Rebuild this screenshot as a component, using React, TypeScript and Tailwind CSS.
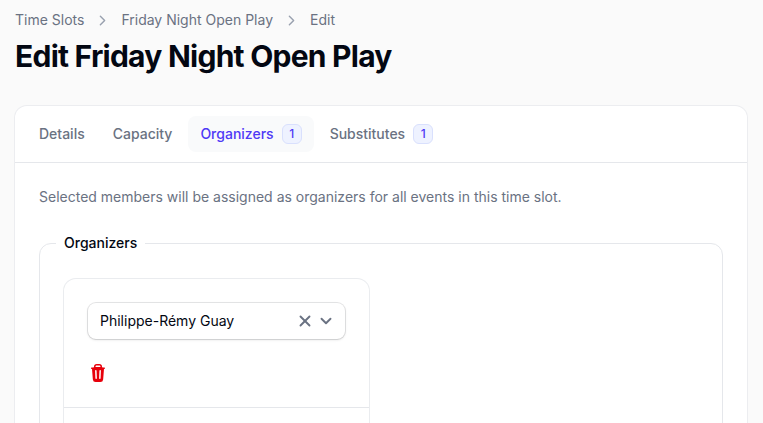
import { ChevronRight, ChevronDown, X } from "lucide-react";

function Tab({ label, count, active }: { label: string; count?: number; active?: boolean }) {
  return (
    <div className={`flex items-center gap-2 h-9 px-3 rounded-lg text-sm font-medium ${active ? "bg-gray-50 text-[#4f39f6]" : "text-gray-500"}`}>
      <span>{label}</span>
      {count !== undefined && (
        <span className="flex items-center justify-center w-5 h-5 rounded-md bg-[#eef2ff] border border-[#d9e0fd] text-xs font-medium text-[#4f39f6]">
          {count}
        </span>
      )}
    </div>
  );
}

function Crumb({ label }: { label: string }) {
  return <span className="text-sm text-gray-500">{label}</span>;
}

export default function App() {
  return (
    <div className="h-[423px] overflow-hidden bg-[#fafafa] font-['Inter',sans-serif] px-[15px] pt-[10px]">
      <nav className="flex items-center gap-2.5 h-5">
        <Crumb label="Time Slots" />
        <ChevronRight className="w-[17px] h-[17px] text-gray-400" />
        <Crumb label="Friday Night Open Play" />
        <ChevronRight className="w-[17px] h-[17px] text-gray-400" />
        <Crumb label="Edit" />
      </nav>
      <h1 className="mt-2 text-3xl font-bold tracking-tight text-gray-950">Edit Friday Night Open Play</h1>

      <div className="mt-8 bg-white rounded-xl ring-1 ring-gray-200/70 w-[732px]">
        <div className="flex items-center gap-1 h-[57px] px-3 border-b border-gray-200">
          <Tab label="Details" />
          <Tab label="Capacity" />
          <Tab label="Organizers" count={1} active />
          <Tab label="Substitutes" count={1} />
        </div>
        <div className="p-6">
          <p className="text-sm text-gray-500">Selected members will be assigned as organizers for all events in this time slot.</p>
          <fieldset className="mt-[26px] rounded-xl border border-gray-200 px-6 pb-6 pt-[26px]">
            <legend className="-ml-2 px-2 text-sm font-medium text-gray-950">Organizers</legend>
            <div className="w-[305px] rounded-xl ring-1 ring-gray-200/80 bg-white">
              <div className="p-6 pb-0">
                <div className="flex items-center h-9 pl-3 pr-2.5 rounded-lg ring-1 ring-gray-950/10 shadow-sm">
                  <span className="flex-1 text-sm text-gray-950">Philippe-Rémy Guay</span>
                  <X strokeWidth={2.5} className="w-[18px] h-[18px] text-gray-500" />
                  <ChevronDown strokeWidth={2.5} className="ml-[3px] w-[18px] h-[18px] text-gray-500" />
                </div>
                <div className="flex h-[68px] items-start pt-6">
                  <svg viewBox="0 0 20 20" fill="currentColor" className="w-5 h-5 text-[#e7000b]">
                    <path
                      fillRule="evenodd"
                      clipRule="evenodd"
                      d="M8.75 1A2.75 2.75 0 0 0 6 3.75v.443c-.795.077-1.584.176-2.365.298a.75.75 0 1 0 .23 1.482l.149-.022.841 10.518A2.75 2.75 0 0 0 7.596 19h4.807a2.75 2.75 0 0 0 2.742-2.53l.841-10.52.149.023a.75.75 0 0 0 .23-1.482A41.03 41.03 0 0 0 14 4.193V3.75A2.75 2.75 0 0 0 11.25 1h-2.5ZM10 4c.84 0 1.673.025 2.5.075V3.75c0-.69-.56-1.25-1.25-1.25h-2.5c-.69 0-1.25.56-1.25 1.25v.325C8.327 4.025 9.16 4 10 4ZM8.58 7.72a.75.75 0 0 0-1.5.06l.3 7.5a.75.75 0 1 0 1.5-.06l-.3-7.5Zm4.34.06a.75.75 0 1 0-1.5-.06l-.3 7.5a.75.75 0 1 0 1.5.06l.3-7.5Z"
                    />
                  </svg>
                </div>
              </div>
              <div className="border-t border-gray-200 h-24" />
            </div>
          </fieldset>
        </div>
      </div>
    </div>
  );
}
